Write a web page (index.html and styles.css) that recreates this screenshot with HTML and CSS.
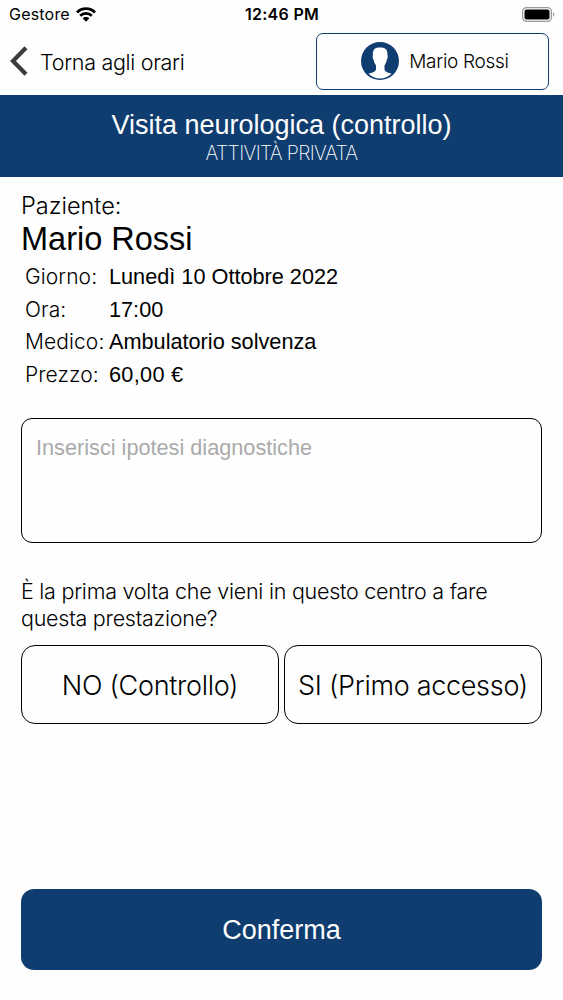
FILE: index.html
```html
<!DOCTYPE html>
<html lang="it">
<head>
  <meta charset="UTF-8">
  <meta name="viewport" content="width=device-width, initial-scale=1.0">
  <title>Conferma prenotazione</title>
  <link rel="stylesheet" href="styles.css">
</head>
<body>
  <div class="status-bar">
    <div class="carrier">
      <span>Gestore</span>
      <svg class="wifi" viewBox="0 0 20 15" width="20" height="15">
        <g fill="none" stroke="#000" stroke-width="2.8">
          <path d="M1 5.4C6 .4 14 .4 19 5.4"/>
          <path d="M4.2 8.8C7.5 5.6 12.5 5.6 15.8 8.8"/>
        </g>
        <path d="M6.6 11.3C8.5 9.5 11.5 9.5 13.4 11.3L10 14.7Z"/>
      </svg>
    </div>
    <span class="time">12:46 PM</span>
    <div class="battery">
      <svg viewBox="0 0 33 15" width="33" height="15">
        <rect x=".6" y=".6" width="28.8" height="13.8" rx="4" fill="none" stroke="#999" stroke-width="1.2"/>
        <rect x="2.5" y="2.5" width="25" height="10" rx="2"/>
        <path d="M31 5.2C32.8 6 32.8 9 31 9.8Z" fill="#999"/>
      </svg>
    </div>
  </div>

  <div class="nav">
    <a class="back">
      <svg viewBox="0 0 18 30" width="18" height="30">
        <path d="M16 1.8L3 15L16 28.2" fill="none" stroke="#3c3c3e" stroke-width="4.2"/>
      </svg>
      <span class="back-label">Torna agli orari</span>
    </a>
    <button type="button" class="user">
      <svg viewBox="0 0 38 38" width="38" height="38">
        <circle cx="19" cy="19" r="19" fill="#0f3d70"/>
        <path d="M19 5.5C14 5.5 11.5 7 11.9 13.5C11.4 14 11.7 17 12.7 18C13 20.5 13.9 22 15 23.3V27C15 30 11 30.5 7.5 31.8C13.5 38.2 24.5 38.2 30.5 31.8C27 30.5 23.5 30 23.5 27V23.3C24.6 22 25.3 20.5 25.7 18C26.7 17 27 14 26.5 13.5C26.8 7 24 5.5 19 5.5Z" fill="#fff"/>
      </svg>
      <span class="user-name">Mario Rossi</span>
    </button>
  </div>

  <div class="banner">
    <div class="banner-title">Visita neurologica (controllo)</div>
    <div class="banner-subtitle">ATTIVITÀ PRIVATA</div>
  </div>

  <main class="content">
    <div class="patient-label">Paziente:</div>
    <div class="patient-name">Mario Rossi</div>

    <dl class="details">
      <dt>Giorno:</dt><dd>Lunedì 10 Ottobre 2022</dd>
      <dt>Ora:</dt><dd>17:00</dd>
      <dt>Medico:</dt><dd>Ambulatorio solvenza</dd>
      <dt>Prezzo:</dt><dd class="price">60,00 €</dd>
    </dl>

    <textarea class="notes" placeholder="Inserisci ipotesi diagnostiche"></textarea>

    <p class="question">È la prima volta che vieni in questo centro a fare<br>questa prestazione?</p>
    <div class="choices">
      <button type="button" class="choice">NO (Controllo)</button>
      <button type="button" class="choice">SI (Primo accesso)</button>
    </div>

    <button type="button" class="confirm">Conferma</button>
  </main>
</body>
</html>
```
FILE: styles.css
```css
* {
  box-sizing: border-box;
}

body {
  margin: 0;
  height: 1000px;
  display: flex;
  flex-direction: column;
  background-color: #fefefe;
  color: #000;
  font-family: "Liberation Sans", Arial, sans-serif;
  overflow: hidden;
}

button {
  padding: 0;
  background: none;
  color: #000;
  font-family: inherit;
  cursor: pointer;
}

svg {
  display: block;
  flex: none;
}

/* Status bar */
.status-bar {
  display: grid;
  grid-template-columns: 1fr auto 1fr;
  align-items: center;
  height: 28px;
  padding: 0 8px 0 9px;
  font-family: Inter, sans-serif;
  font-size: 16px;
}

.carrier {
  display: flex;
  align-items: center;
  gap: 6px;
  letter-spacing: 0.2px;
}

.time {
  font-weight: 600;
  letter-spacing: 0.3px;
}

.battery {
  display: flex;
  justify-content: flex-end;
}

/* Navigation */
.nav {
  display: flex;
  justify-content: space-between;
  align-items: center;
  height: 67px;
  padding: 0 14px 1px 10px;
}

.back {
  display: flex;
  align-items: center;
  gap: 12px;
}

.back-label,
.user-name,
.banner-subtitle,
.patient-label,
.details dt,
.question,
.choice {
  font-family: Inter, sans-serif;
  font-weight: 300;
}

.back-label {
  padding-top: 1px;
  font-size: 21.5px;
  letter-spacing: -0.3px;
}

.user {
  display: flex;
  justify-content: center;
  align-items: center;
  gap: 10px;
  width: 233px;
  height: 57px;
  padding-left: 5px;
  border: 1px solid #0f3d70;
  border-radius: 7px;
}

.user-name {
  font-size: 19px;
  letter-spacing: -0.3px;
}

/* Service banner */
.banner {
  height: 82px;
  padding-top: 14px;
  background-color: #0f3d70;
  color: #fff;
  text-align: center;
}

.banner-title {
  font-size: 27px;
  line-height: 32px;
}

.banner-subtitle {
  font-size: 19.5px;
  font-weight: 250;
  line-height: 24px;
  letter-spacing: -0.65px;
}

/* Booking */
.content {
  flex: 1;
  display: flex;
  flex-direction: column;
  padding: 15px 21px 30px;
}

.patient-label {
  font-size: 23.5px;
  font-weight: 270;
  line-height: 28px;
}

.patient-name {
  font-size: 32.5px;
  line-height: 39px;
}

.details {
  display: grid;
  grid-template-columns: 84px 1fr;
  margin: 2px 0 0 4px;
  font-size: 21.7px;
  line-height: 32.7px;
}

.details dt {
  font-size: 21px;
  font-weight: 270;
  letter-spacing: 0.1px;
}

.details dd {
  margin: 0;
}

.details .price {
  letter-spacing: 0.3px;
}

.notes {
  flex: none;
  height: 125px;
  margin-top: 26px;
  padding: 15px 14px;
  border: 1px solid #000;
  border-radius: 11px;
  background: none;
  font-family: inherit;
  font-size: 21.7px;
  line-height: 28px;
  resize: none;
}

.notes::placeholder {
  color: #aaa;
}

.question {
  margin: 35px 0 13px;
  font-size: 21.5px;
  line-height: 27px;
  letter-spacing: -0.25px;
}

.choices {
  display: flex;
  gap: 5px;
}

.choice {
  flex: 1;
  height: 79px;
  padding-top: 2px;
  border: 1px solid #000;
  border-radius: 14px;
  font-size: 27px;
  letter-spacing: -0.3px;
}

.confirm {
  height: 81px;
  padding-top: 1px;
  margin-top: auto;
  border: none;
  border-radius: 13px;
  background-color: #0f3d70;
  color: #fff;
  font-size: 27px;
}
```
